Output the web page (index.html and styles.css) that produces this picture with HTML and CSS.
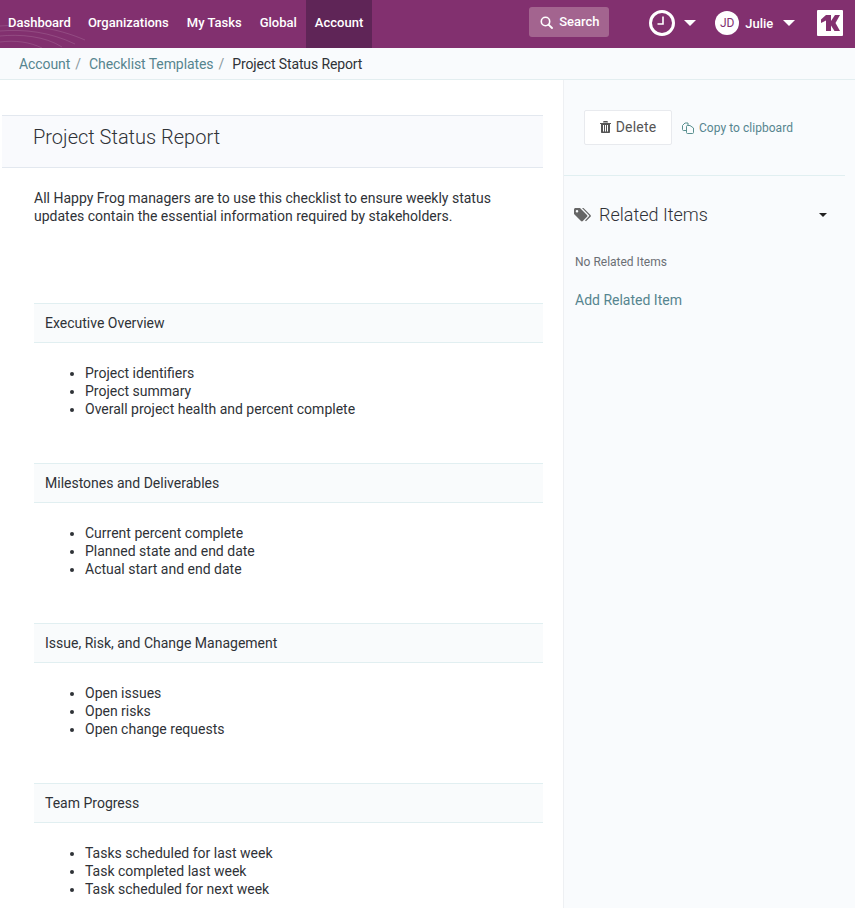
FILE: index.html
```html
<!DOCTYPE html>
<html lang="en">
<head>
<meta charset="utf-8">
<title>Project Status Report</title>
<link rel="stylesheet" href="styles.css">
</head>
<body>
<header class="topbar">
  <svg class="waves" width="90" height="48" viewBox="0 0 90 48" aria-hidden="true"><path d="M0 26C25 24 55 27 85 40M0 31C25 29 50 32 75 44M0 36C20 34 45 36 62 47M0 42C15 40 30 42 42 48" fill="none" stroke="#fff" stroke-opacity=".13"/></svg>
  <nav class="mainnav">
    <a class="navlink">Dashboard</a>
    <a class="navlink">Organizations</a>
    <a class="navlink">My Tasks</a>
    <a class="navlink">Global</a>
    <a class="navlink active">Account</a>
  </nav>
  <div class="search">
    <svg width="13" height="13" viewBox="0 0 13 13" aria-hidden="true"><circle cx="5.5" cy="5.5" r="4.2" fill="none" stroke="#fff" stroke-width="1.6"/><path d="M8.600 8.600L12 12" stroke="#fff" stroke-width="1.800" stroke-linecap="round"/></svg>
    <span class="searchtext">Search</span>
  </div>
  <div class="clock">
    <svg width="26" height="26" viewBox="0 0 26 26" aria-hidden="true"><circle cx="13" cy="13" r="11.500" fill="none" stroke="#fff" stroke-width="3"/><path d="M14 6.500V14H8.500" fill="none" stroke="#fff" stroke-width="1.600"/></svg>
    <i class="caret"></i>
  </div>
  <div class="user">
    <span class="avatar">JD</span>
    <span class="username">Julie</span>
    <i class="caret"></i>
  </div>
  <div class="logo">
    <svg width="26" height="26" viewBox="0 0 26 26" aria-hidden="true"><rect width="26" height="26" rx="1" fill="#fff"/><path d="M4 9.500L9 5H14V11L18 5H23L18.500 13L23 21H17.500L14 15.500V21H9V10.500L4 13Z" fill="#82306f"/></svg>
  </div>
</header>
<div class="crumbs">
  <a class="crumb">Account</a><span class="sep">/</span>
  <a class="crumb">Checklist Templates</a><span class="sep">/</span>
  <span class="current">Project Status Report</span>
</div>
<div class="layout">
  <main class="content">
    <h1 class="title">Project Status Report</h1>
    <p class="desc">All Happy Frog managers are to use this checklist to ensure weekly status updates contain the essential information required by stakeholders.</p>
    <section class="block">
      <h2 class="blockhead">Executive Overview</h2>
      <ul class="items"><li>Project identifiers</li><li>Project summary</li><li>Overall project health and percent complete</li></ul>
    </section>
    <section class="block">
      <h2 class="blockhead">Milestones and Deliverables</h2>
      <ul class="items"><li>Current percent complete</li><li>Planned state and end date</li><li>Actual start and end date</li></ul>
    </section>
    <section class="block">
      <h2 class="blockhead">Issue, Risk, and Change Management</h2>
      <ul class="items"><li>Open issues</li><li>Open risks</li><li>Open change requests</li></ul>
    </section>
    <section class="block">
      <h2 class="blockhead">Team Progress</h2>
      <ul class="items"><li>Tasks scheduled for last week</li><li>Task completed last week</li><li>Task scheduled for next week</li></ul>
    </section>
  </main>
  <aside class="side">
    <div class="actions">
      <button class="btn">
        <svg width="11" height="12" viewBox="0 0 11 12" aria-hidden="true"><path d="M0 2H11V3H10V11C10 11.600 9.600 12 9 12H2C1.400 12 1 11.600 1 11V3H0ZM3.500 0H7.500L8 1.500H3ZM3 4V10.500H4V4ZM5 4V10.500H6V4ZM7 4V10.500H8V4Z" fill="#555" fill-rule="evenodd"/></svg>
        <span>Delete</span>
      </button>
      <a class="copy">
        <svg width="12" height="12" viewBox="0 0 12 12" aria-hidden="true"><path d="M4.500 4.500C4.500 4 4.800 3.500 5.300 3.500H8L11.500 6V10.500C11.500 11 11.200 11.500 10.700 11.500H5.300C4.800 11.500 4.500 11 4.500 10.500ZM4.500 8.500H1.300C.8 8.500 .5 8 .5 7.500V3.500L3 1H6V3.500" fill="none" stroke="#5a9090"/></svg>
        <span>Copy to clipboard</span>
      </a>
    </div>
    <div class="related">
      <div class="relhead">
        <svg width="18" height="14" viewBox="0 0 18 14" aria-hidden="true"><path d="M0 1.500C0 .7 .7 0 1.500 0H6L13 7C13.500 7.500 13.500 8.300 13 8.800L8.800 13C8.300 13.500 7.500 13.500 7 13L0 6ZM3 2A1.300 1.300 0 1 0 3 4.600A1.300 1.300 0 1 0 3 2Z" fill="#666" fill-rule="evenodd"/><path d="M8 0H9.500L16.500 7C17 7.500 17 8.300 16.500 8.800L12 13.300L11 12.500L15 8.200C15.300 7.900 15.300 7.500 15 7.200Z" fill="#666"/></svg>
        <span class="reltitle">Related Items</span>
        <i class="caret small"></i>
      </div>
      <p class="none">No Related Items</p>
      <a class="add">Add Related Item</a>
    </div>
  </aside>
</div>
</body>
</html>
```
FILE: styles.css
```css
* { box-sizing: border-box; }
html, body { margin: 0; height: 100%; }
body {
  font-family: Roboto, "Liberation Sans", sans-serif;
  font-size: 14px;
  color: #2f3237;
  background: #fff;
  overflow: hidden;
}
.topbar {
  position: relative;
  display: flex;
  align-items: center;
  height: 48px;
  background: #82306f;
  color: #fff;
}
.waves { position: absolute; left: 0; top: 0; }
.mainnav { position: relative; display: flex; height: 48px; flex: none; }
.navlink {
  display: flex;
  align-items: center;
  padding: 0 9px 3px;
  font-weight: 500;
  font-size: 13px;
  white-space: nowrap;
  color: #fff;
}
.navlink:first-child { padding: 0 8px 3px; }
.active { background: #5f2557; }
.search {
  display: flex;
  align-items: center;
  flex: none;
  gap: 6px;
  margin-left: 157px;
  width: 80px;
  height: 30px;
  margin-top: -4px;
  padding-left: 11px;
  border-radius: 3px;
  background: #a3648f;
  font-size: 13px;
  font-weight: 500;
}
.searchtext { padding-bottom: 2px; }
.clock { display: flex; align-items: center; flex: none; margin: -2px 0 0 40px; }
.caret {
  display: block;
  width: 0;
  height: 0;
  margin-left: 9px;
  border-left: 6px solid transparent;
  border-right: 6px solid transparent;
  border-top: 6px solid #fff;
}
.user { display: flex; align-items: center; flex: none; margin: -2px 0 0 19px; }
.avatar {
  display: flex;
  align-items: center;
  justify-content: center;
  width: 24px;
  height: 24px;
  border-radius: 50%;
  background: #fff;
  color: #82306f;
  font-size: 12px;
}
.username { margin: 0 1px 0 6px; font-size: 13px; font-weight: 500; }
.logo { display: flex; flex: none; margin: -2px 0 0 22px; }
.crumbs {
  display: flex;
  align-items: center;
  height: 32px;
  padding: 0 0 0 19px;
  background: #f9fbfd;
  border-bottom: 1px solid #e3eef0;
}
.crumb { color: #56858f; letter-spacing: -.08px; }
.sep { margin: 0 8px 0 5px; color: #8a9aa0; }
.current { color: #2f3237; letter-spacing: -.13px; }
.layout { display: flex; height: 828px; }
.content { width: 563px; padding: 35px 20px 0 2px; }
.title {
  margin: 0;
  height: 53px;
  padding: 0 0 0 31px;
  background: #f9fafd;
  border-top: 1px solid #e3e8ef;
  border-bottom: 1px solid #e3e8ef;
  font-size: 20px;
  font-weight: 300;
  line-height: 43px;
  color: #2f3237;
}
.desc {
  margin: 21px 0 78px 32px;
  width: 480px;
  line-height: 18px;
}
.block { margin-left: 32px; height: 160px; }
.blockhead {
  margin: 0;
  height: 40px;
  padding-left: 11px;
  background: #f9fbfc;
  border-top: 1px solid #e1eff1;
  border-bottom: 1px solid #e1eff1;
  font-size: 14px;
  font-weight: 400;
  line-height: 38px;
  color: #2f3237;
}
.items {
  margin: 21px 0 0;
  padding: 0 0 0 51px;
  line-height: 18px;
}
.side {
  flex: 1;
  background: #f9fbfd;
  border-left: 1px solid #eef0f3;
}
.actions {
  display: flex;
  align-items: flex-start;
  height: 96px;
  margin-right: 10px;
  padding: 30px 0 0 20px;
  border-bottom: 1px solid #e1eff1;
}
.btn {
  display: flex;
  align-items: center;
  justify-content: center;
  flex: none;
  gap: 5px;
  width: 88px;
  height: 35px;
  padding: 0 0 2px;
  background: #fff;
  border: 1px solid #e8eaee;
  border-radius: 2px;
  font: 400 14px Roboto, "Liberation Sans", sans-serif;
  letter-spacing: .2px;
  color: #555;
}
.copy {
  display: flex;
  align-items: center;
  gap: 5px;
  height: 35px;
  margin-left: 10px;
  font-size: 12px;
  letter-spacing: .04px;
  color: #56858f;
}
.related { padding: 28px 0 0 10px; }
.relhead { display: flex; align-items: center; }
.reltitle {
  margin-left: 7px;
  font-size: 18px;
  font-weight: 300;
  color: #2f3237;
}
.small {
  margin-left: 111px;
  border-left-width: 4px;
  border-right-width: 4px;
  border-top: 4px solid #222;
}
.none { margin: 30px 0 0 1px; font-size: 12px; color: #6b6f75; }
.add {
  display: block;
  margin: 23px 0 0 1px;
  color: #56858f;
}
```
